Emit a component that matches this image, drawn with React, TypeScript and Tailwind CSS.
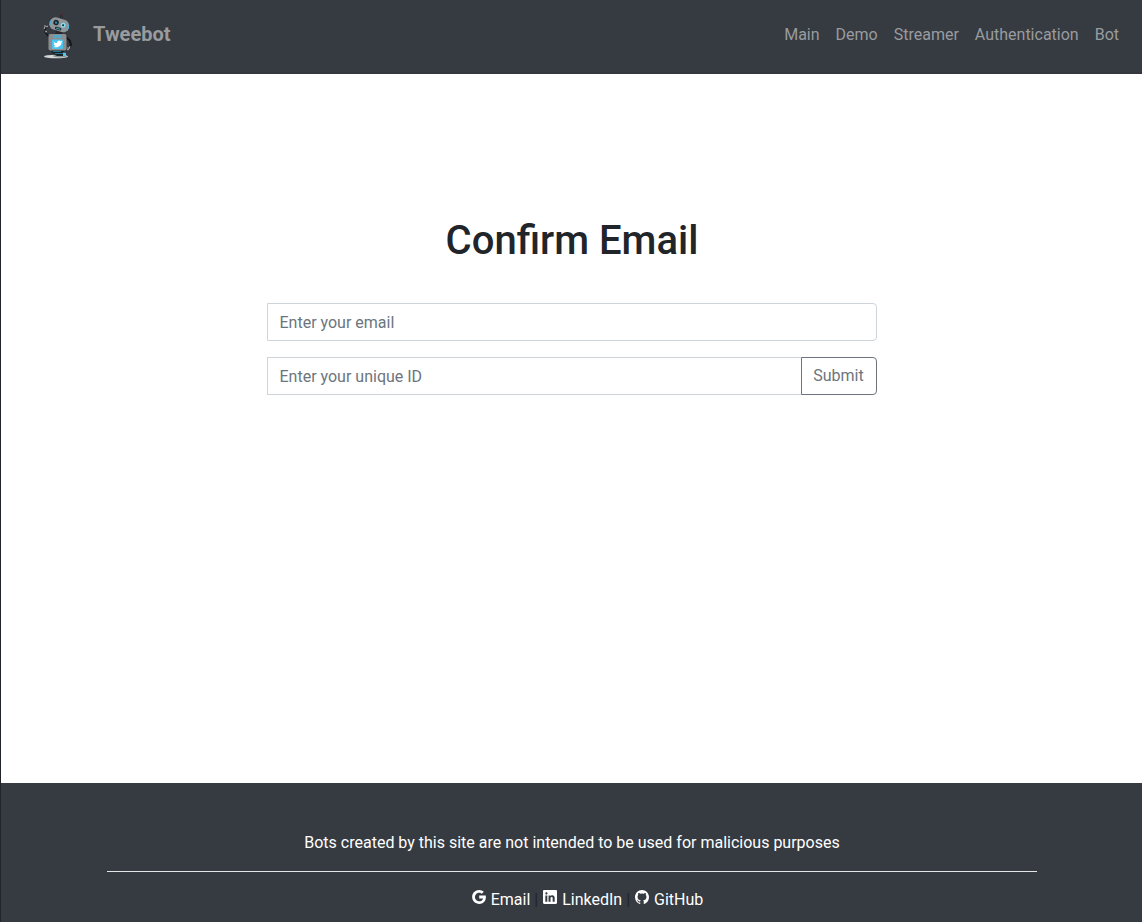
import { IoLogoGoogle, IoLogoLinkedin, IoLogoGithub } from "react-icons/io5";

const navLinks = ["Main", "Demo", "Streamer", "Authentication", "Bot"];

function RobotLogo() {
  return (
    <svg viewBox="0 0 44 56" className="h-14 w-11" aria-hidden="true">
      <ellipse cx="20" cy="48.5" rx="12" ry="1.8" fill="#d5d8d6" />
      <ellipse cx="24" cy="48" rx="7" ry="1.4" fill="#8d9696" />
      <path d="M15 42h13v3l2 3h-9l-5-3z" fill="#17252b" />
      <path d="M17 43.5h8M19 45.5h8" stroke="#22708a" strokeWidth="1" />
      <path d="M27 44.5l3 .5v3h-3z" fill="#52c7e9" />
      <path d="M13 29l-4-5 1-5" fill="none" stroke="#17191c" strokeWidth="1.5" />
      <path d="M9 17v2l-1 2M12 18l-2 1" fill="none" stroke="#b1b3b4" strokeWidth="1" />
      <circle cx="10" cy="23.5" r="1" fill="#999fa2" />
      <path d="M30 29l4 4 1 4-3 4" fill="none" stroke="#141619" strokeWidth="2" />
      <path d="M34 38l-1 3-2 1M32 39v3" fill="none" stroke="#aeb0b1" strokeWidth="1" />
      <path d="M20 22l7 1-1 4h-7z" fill="#27292d" />
      <rect x="12.5" y="26" width="18" height="16.5" rx="2" fill="#8b8d8f" />
      <path d="M17 27h8v3h-8z" fill="#55a9c6" />
      <rect x="16" y="31.5" width="11" height="9.5" rx="1" fill="#4cc4f0" />
      <path d="M17.5 33.5c1 1 2 1.5 3.5 1.5 0-2.5 3-3.5 3.5-1.5l2-1-1 2c0 4-4 5.5-8 4.5l2-1-2-1.5 1-.5-1-2z" fill="#fff" />
      <path d="M24 11l1-4 3-2M25 7l2 3" fill="none" stroke="#282a30" strokeWidth="1" />
      <circle cx="27" cy="6" r="1" fill="#702635" />
      <g transform="rotate(17 23 17)">
        <rect x="13.5" y="10.5" width="19.5" height="12.5" rx="5.5" fill="#929597" />
        <path d="M14.5 14c-1 2-1 4 0 6M32 14c1 2 1 4 0 6" fill="none" stroke="#4fb0d0" strokeWidth="1.5" />
        <circle cx="19.5" cy="15.5" r="2.7" fill="#16202a" />
        <circle cx="19.5" cy="15.5" r="1.2" fill="#328aa8" />
        <circle cx="27" cy="16" r="2.5" fill="#7fdcf4" />
        <circle cx="27" cy="16" r="1" fill="#14242d" />
        <rect x="20" y="19.5" width="6.5" height="2.5" rx="1" fill="#152c35" />
        <path d="M21 20.8h4.5" stroke="#57abc1" strokeWidth=".8" />
      </g>
    </svg>
  );
}

export default function App() {
  return (
    <div className="flex min-h-screen flex-col border-l border-[#212529] bg-white font-['Roboto',sans-serif] text-base text-[#212529]">
      <header className="flex h-[74px] items-center justify-between border-b-2 border-[#34373d] bg-[#363a41] pr-[23px] pl-[35px]">
        <a href="#" className="flex items-center gap-[13px] text-xl font-bold text-[#999c9f]">
          <RobotLogo />
          <span className="pb-1">Tweebot</span>
        </a>
        <nav className="flex gap-4 pb-0.5 text-[#999c9f]">
          {navLinks.map((label) => (
            <a key={label} href="#">{label}</a>
          ))}
        </nav>
      </header>

      <main className="flex grow flex-col items-center px-4 pt-[143px]">
        <h1 className="pl-px text-[40px] leading-12 font-medium">Confirm Email</h1>
        <form className="mt-[38px] flex w-full max-w-[610px] flex-col gap-4" onSubmit={(e) => e.preventDefault()}>
          <input
            type="email"
            aria-label="Email"
            placeholder="Enter your email"
            className="h-[38px] w-full rounded-r border border-[#ced4da] px-3 placeholder:text-[#6c757d]"
          />
          <div className="flex">
            <input
              type="text"
              aria-label="Unique ID"
              placeholder="Enter your unique ID"
              className="h-[38px] min-w-0 grow border border-r-0 border-[#ced4da] px-3 placeholder:text-[#6c757d]"
            />
            <button type="submit" className="h-[38px] w-[76px] rounded-r border border-[#6c757d] pb-px text-[#6c757d]">
              Submit
            </button>
          </div>
        </form>
      </main>

      <footer className="bg-[#363a41] px-[106px] pt-12 pb-2.5 text-center text-white">
        <p className="pl-px">Bots created by this site are not intended to be used for malicious purposes</p>
        <hr className="my-4 -mr-px border-[#e5e6e8]" />
        <div className="flex items-center justify-center gap-1 pl-[31px] text-[#212529]">
          <a href="#" className="flex items-center gap-1 text-white">
            <IoLogoGoogle className="mb-1.5 size-4" />Email
          </a>
          |
          <a href="#" className="flex items-center gap-1 text-white">
            <IoLogoLinkedin className="mb-1.5 size-4" />LinkedIn
          </a>
          |
          <a href="#" className="flex items-center gap-1 text-white">
            <IoLogoGithub className="mb-1.5 size-4" />GitHub
          </a>
        </div>
      </footer>
    </div>
  );
}
